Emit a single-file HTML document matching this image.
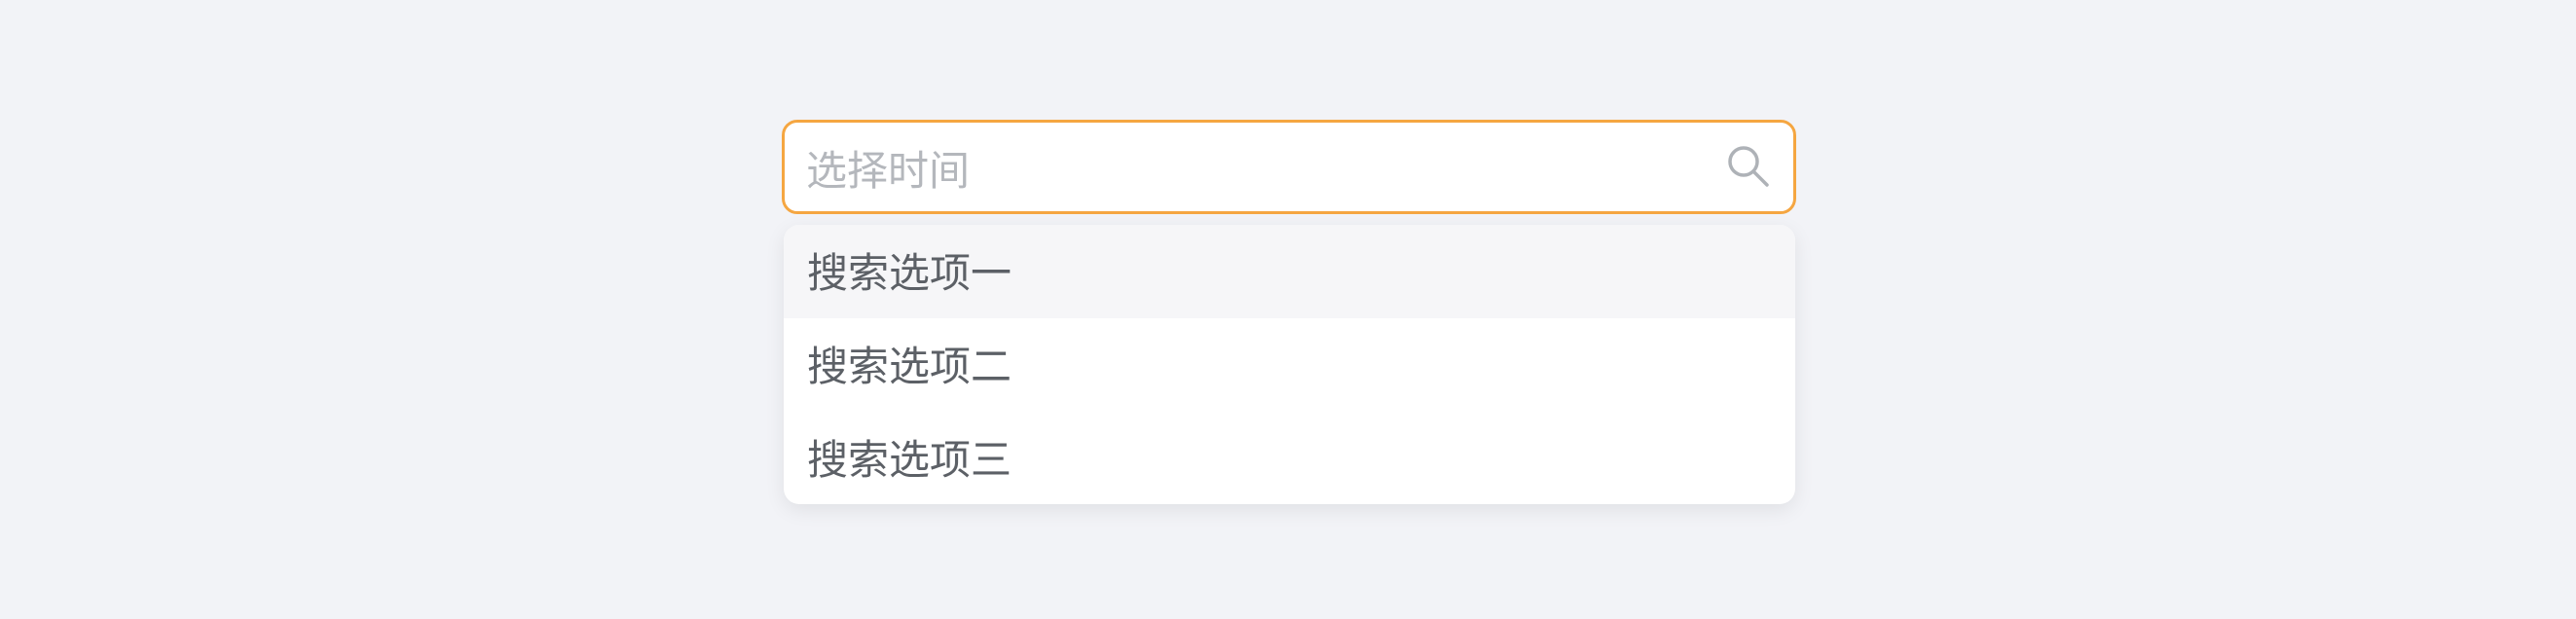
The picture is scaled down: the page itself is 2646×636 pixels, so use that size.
<!DOCTYPE html>
<html><head><meta charset="utf-8"><style>
html,body{margin:0;padding:0;}
body{width:2646px;height:636px;background:#f2f3f7;position:relative;overflow:hidden;font-family:"Liberation Sans","Noto Sans CJK SC",sans-serif;}
.input{position:absolute;left:803px;top:123px;width:1036px;height:91px;border:3px solid #f5a641;border-radius:16px;background:#fff;}
.ph{position:absolute;left:22px;top:4px;line-height:91px;font-size:42px;color:#b4b7bc;}
.icon{position:absolute;left:967px;top:22px;}
.dd{position:absolute;left:805px;top:231px;width:1039px;height:287px;background:#fff;border-radius:16px;box-shadow:0 6px 20px rgba(0,0,0,0.08);overflow:hidden;}
.row{height:96px;line-height:100px;padding-left:24px;font-size:42px;color:#5c6066;}
.row.a{background:#f6f6f8;}
</style></head><body>
<div class="input"><div class="ph">选择时间</div>
<svg class="icon" width="46" height="46" viewBox="0 0 46 46"><circle cx="18" cy="18" r="14" fill="none" stroke="#aeb2b7" stroke-width="3.5"/><line x1="28" y1="28" x2="42" y2="42" stroke="#aeb2b7" stroke-width="3.5" stroke-linecap="round"/></svg>
</div>
<div class="dd">
<div class="row a">搜索选项一</div>
<div class="row">搜索选项二</div>
<div class="row">搜索选项三</div>
</div>
</body></html>
